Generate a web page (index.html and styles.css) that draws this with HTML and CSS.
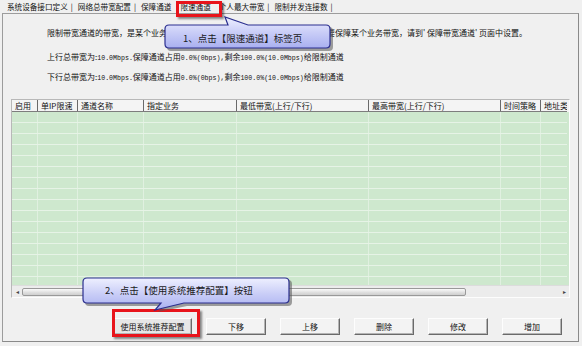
FILE: index.html
```html
<!DOCTYPE html>
<html lang="zh-CN">
<head>
    <meta charset="UTF-8">
    <title>限速通道</title>
    <link rel="stylesheet" href="styles.css">
</head>
<body>
    <div class="page">
        <div class="tabs">
            <span class="tab">系统设备接口定义</span><span class="sep">|</span>
            <span class="tab">网络总带宽配置</span><span class="sep">|</span>
            <span class="tab">保障通道</span>
            <span class="tab active">限速通道</span>
            <span class="tab">个人最大带宽</span><span class="sep">|</span>
            <span class="tab">限制并发连接数</span><span class="sep">|</span>
        </div>

        <div class="panel">
            <div class="info">
                <p class="line first">限制带宽通道的带宽，是某个业务能使用的最大带宽，不保证最小带宽。如果需要保障某个业务带宽，请到' 保障带宽通道' 页面中设置。</p>
                <p class="line">上行总带宽为:<span class="mono">10.0Mbps.</span>保障通道占用<span class="mono">0.0%(0bps),</span>剩余<span class="mono">100.0%(10.0Mbps)</span>给限制通道</p>
                <p class="line">下行总带宽为:<span class="mono">10.0Mbps.</span>保障通道占用<span class="mono">0.0%(0bps),</span>剩余<span class="mono">100.0%(10.0Mbps)</span>给限制通道</p>
            </div>

            <div class="grid">
                <div class="grid-head">
                    <div>启用</div>
                    <div>单IP限速</div>
                    <div>通道名称</div>
                    <div>指定业务</div>
                    <div>最低带宽(上行/下行)</div>
                    <div>最高带宽(上行/下行)</div>
                    <div>时间策略</div>
                    <div>地址类型</div>
                </div>
                <div class="grid-body" id="gridBody"></div>
                <div class="hscroll">
                    <span class="arrow">&#9666;</span>
                    <span class="thumb"></span>
                    <span class="track"></span>
                    <span class="arrow">&#9656;</span>
                </div>
            </div>

            <div class="actions">
                <button class="btn wide">使用系统推荐配置</button>
                <button class="btn">下移</button>
                <button class="btn">上移</button>
                <button class="btn">删除</button>
                <button class="btn">修改</button>
                <button class="btn">增加</button>
            </div>
        </div>

        <!-- annotation overlays -->
        <div class="mark mark-tab"></div>
        <div class="mark mark-btn"></div>

        <div class="callout callout-1">
            <svg width="176" height="44" viewBox="160 14 176 44">
                <defs>
                    <linearGradient id="fill1" x1="0" y1="0" x2="0" y2="1">
                        <stop offset="0" stop-color="#eef0ff"/>
                        <stop offset="0.5" stop-color="#c9cdf7"/>
                        <stop offset="1" stop-color="#a9b0f0"/>
                    </linearGradient>
                </defs>
                <path d="M171 27 L229 27 L226 17 L250 27 L329 27 Q333 27 333 31 L333 47 Q333 51 329 51 L171 51 Q167 51 167 47 L167 31 Q167 27 171 27 Z" fill="#555" opacity="0.55"/>
                <path d="M169 25 L228 25 L225 17 L248 25 L326 25 Q330 25 330 29 L330 44 Q330 48 326 48 L169 48 Q165 48 165 44 L165 29 Q165 25 169 25 Z" fill="url(#fill1)" stroke="#2b2f8f" stroke-width="1.2"/>
            </svg>
            <span class="callout-text">1、点击【限速通道】标签页</span>
        </div>

        <div class="callout callout-2">
            <svg width="214" height="40" viewBox="80 274 214 40">
                <defs>
                    <linearGradient id="fill2" x1="0" y1="0" x2="0" y2="1">
                        <stop offset="0" stop-color="#eef0ff"/>
                        <stop offset="0.5" stop-color="#c9cdf7"/>
                        <stop offset="1" stop-color="#a9b0f0"/>
                    </linearGradient>
                </defs>
                <path d="M89 280 L288 280 Q292 280 292 284 L292 302 Q292 306 288 306 L187 306 L158 312 L164 306 L89 306 Q85 306 85 302 L85 284 Q85 280 89 280 Z" fill="#555" opacity="0.55"/>
                <path d="M87 278 L285 278 Q289 278 289 282 L289 299 Q289 303 285 303 L184 303 L155 310 L161 303 L87 303 Q83 303 83 299 L83 282 Q83 278 87 278 Z" fill="url(#fill2)" stroke="#2b2f8f" stroke-width="1.2"/>
            </svg>
            <span class="callout-text">2、点击【使用系统推荐配置】按钮</span>
        </div>
    </div>

    <script>
        // Fill the list with empty rows
        const columns = 8;
        const body = document.getElementById('gridBody');
        for (let r = 0; r < 16; r++) {
            const row = document.createElement('div');
            row.className = 'grid-row';
            for (let c = 0; c < columns; c++) {
                row.appendChild(document.createElement('div'));
            }
            body.appendChild(row);
        }
    </script>
</body>
</html>
```

FILE: styles.css
```css
/* General */
body {
    margin: 0;
    background: #f0f0f0;
    font-family: "Noto Sans CJK SC", "Noto Sans", sans-serif;
    font-size: 8px;
    color: #111;
}
p {
    margin: 0;
}
.page {
    position: relative;
    width: 582px;
    height: 346px;
    overflow: hidden;
}

/* Tabs */
.tabs {
    display: flex;
    align-items: center;
    height: 13px;
    padding-left: 7px;
    white-space: nowrap;
    line-height: 13px;
    font-size: 7.6px;
}
.tab {
    margin-right: 3px;
}
.sep {
    margin-right: 5px;
}
.tab.active {
    margin: 0 8px 0 6px;
}

/* Panel */
.panel {
    margin: 0 3px 0 2px;
    height: 329px;
    box-sizing: border-box;
    border: 1px solid #9c9c9c;
    border-right-color: #8a8a8a;
    border-bottom-color: #8a8a8a;
    background: #f0f0f0;
    padding: 13px 0 0 8px;
}
.info {
    padding-left: 36px;
    height: 72px;
}
.line {
    height: 12px;
    line-height: 12px;
    white-space: nowrap;
    margin-bottom: 12px;
}
.line + .line {
    margin-bottom: 8px;
}
.mono {
    font-family: "Liberation Mono", monospace;
    font-size: 6.6px;
}

/* List */
.grid {
    width: 557px;
    border: 1px solid #b8b8b8;
    border-right-color: #fdfdfd;
    border-bottom-color: #fdfdfd;
    background: #f4f4f4;
    overflow: hidden;
}
.grid-head,
.grid-row {
    display: grid;
    grid-template-columns: 26px 40px 66px 93px 132px 132px 40px 40px;
    width: 555px;
    overflow: hidden;
}
.grid-head {
    height: 11px;
    line-height: 11px;
    background: #f4f4f4;
    border-bottom: 1px solid #7d7d7d;
}
.grid-head div {
    padding-left: 3px;
    border-right: 1px solid #6a6a6a;
    white-space: nowrap;
    overflow: hidden;
}
.grid-body {
    height: 173px;
    overflow: hidden;
    background: #cee8ce;
}
.grid-row {
    height: 11px;
    box-sizing: border-box;
    border-bottom: 1px solid #e6f3e6;
}
.grid-row div {
    border-right: 1px solid #e0f0e0;
}
.hscroll {
    display: flex;
    align-items: center;
    height: 11px;
    background: #ececec;
    border-top: 1px solid #dcdcdc;
}
.arrow {
    width: 10px;
    font-size: 6px;
    text-align: center;
    color: #444;
}
.thumb {
    width: 444px;
    height: 8px;
    box-sizing: border-box;
    border: 1px solid #999;
    border-radius: 2px;
    background: linear-gradient(#fafafa, #dedede 60%, #cfcfcf);
}
.track {
    flex: 1;
}

/* Buttons */
.actions {
    display: flex;
    gap: 14px;
    justify-content: flex-end;
    padding: 20px 16px 0 0;
}
.btn {
    width: 60px;
    height: 17px;
    padding: 0;
    font-family: inherit;
    font-size: 8px;
    color: #111;
    background: #f3f3f3;
    border: 1px solid;
    border-color: #fdfdfd #6a6a6a #6a6a6a #fdfdfd;
    box-shadow: inset -1px -1px 0 #b4b4b4;
}
.btn.wide {
    width: 79px;
    background: #e7e7e7;
}

/* Annotations */
.mark {
    position: absolute;
    border: 3px solid #e8141b;
    box-shadow: 2px 2px 2px rgba(0, 0, 0, 0.45);
}
.mark-tab {
    left: 176px;
    top: 1px;
    width: 40px;
    height: 10px;
}
.mark-btn {
    left: 112px;
    top: 309px;
    width: 82px;
    height: 22px;
}
.callout {
    position: absolute;
}
.callout svg {
    display: block;
}
.callout-1 {
    left: 160px;
    top: 14px;
}
.callout-2 {
    left: 80px;
    top: 274px;
}
.callout-text {
    position: absolute;
    font-size: 9.5px;
    color: #1a1a1a;
    white-space: nowrap;
}
.callout-1 .callout-text {
    left: 23px;
    top: 17px;
}
.callout-2 .callout-text {
    left: 25px;
    top: 9px;
}
```
